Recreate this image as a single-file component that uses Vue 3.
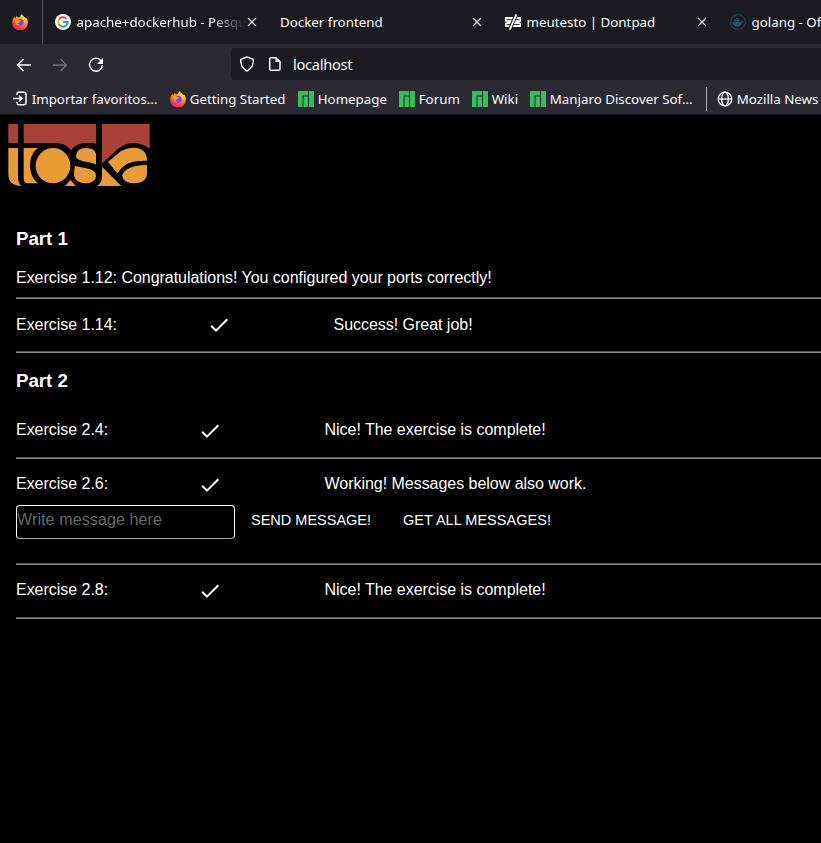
<script setup>
const bookmarks = [
  { label: 'Importar favoritos...', icon: 'import', w: 158 },
  { label: 'Getting Started', icon: 'fox', w: 128 },
  { label: 'Homepage', icon: 'manjaro', w: 101 },
  { label: 'Forum', icon: 'manjaro', w: 73 },
  { label: 'Wiki', icon: 'manjaro', w: 58 },
  { label: 'Manjaro Discover Sof...', icon: 'manjaro', w: 176 },
]
</script>

<template>
  <div class="window">
    <svg class="defs" width="0" height="0">
      <defs>
        <linearGradient id="flame" x1=".8" y1="0" x2=".25" y2="1">
          <stop offset="0" stop-color="#fff44f" />
          <stop offset=".35" stop-color="#ffa32b" />
          <stop offset=".68" stop-color="#ff4b3e" />
          <stop offset="1" stop-color="#e9168c" />
        </linearGradient>
        <symbol id="fox" viewBox="0 0 16 16">
          <path d="M2.2 3 3.4 4.3 4.8 1.8 5.9 3.6 8.2 3C8.3 1.6 9 .7 10 .1c.4 1.8 2.5 2.5 3.4 4l.6-.7c1.2 1.6 2 3.4 1.8 5.4A7.8 7.8 0 0 1 .2 8.6C.2 6.300 1 4.400 2.200 3Z" fill="url(#flame)" />
          <circle cx="8.200" cy="8.300" r="3.300" fill="#7542e5" />
          <path d="M3.300 5.500c1.500-.8 3-.4 4 .7l2 .3c-.4 1.100-2 1-2.300 2.200-.8.300-1.500-.1-1.900-.3.500 1.700 2 2.300 3.400 1.900-3 2.100-5.900-.2-5.200-4.800Z" fill="#ff9a22" />
          <path d="M9.200 4.500c3 .2 4.300 2.600 3.400 5 1.300-1.500 1.200-4.700-1.100-6.200Z" fill="#ffd43a" />
        </symbol>
        <symbol id="manjaro" viewBox="0 0 16 16">
          <path d="M0 0h10v4.500H4.500V16H0ZM5.500 5.500H10V16H5.500ZM11 0h5v16h-5Z" fill="#35bf5c" />
        </symbol>
        <symbol id="import" viewBox="0 0 16 16">
          <path d="M5 4V3a1.700 1.700 0 0 1 1.700-1.700h5.600A1.700 1.700 0 0 1 14 3v9a1.700 1.700 0 0 1-1.700 1.700H6.700A1.700 1.700 0 0 1 5 12v-1M1 7.500h8" fill="none" stroke="#fbfbfe" stroke-width="1.500" />
          <path d="m7.200 3.900 4 3.600-4 3.600Z" fill="#fbfbfe" />
        </symbol>
        <symbol id="close" viewBox="0 0 10 10">
          <path d="m1 1 8 8M9 1 1 9" stroke="#e4e3ea" stroke-width="1.150" fill="none" />
        </symbol>
        <symbol id="check" viewBox="0 0 24 24">
          <path d="M9 16.170 4.830 12l-1.420 1.410L9 19 21 7l-1.410-1.410Z" fill="#fff" />
        </symbol>
      </defs>
    </svg>

    <header class="browser">
      <div class="tabs">
        <div class="pinned"><svg width="16" height="16"><use href="#fox" /></svg></div>
        <div class="tab first">
          <svg width="16" height="16" viewBox="0 0 16 16">
            <circle cx="8" cy="8" r="8" fill="#fff" />
            <g fill="none" stroke-width="2">
              <path d="M11.500 4.700A4.700 4.700 0 0 0 4 5.700" stroke="#ea4335" />
              <path d="M4 5.600a4.700 4.700 0 0 0 0 4.800" stroke="#fbbc05" />
              <path d="M4 10.300a4.700 4.700 0 0 0 7.100 1.300" stroke="#34a853" />
              <path d="M11 11.700A4.700 4.700 0 0 0 12.700 8H8.200" stroke="#4285f4" />
            </g>
          </svg>
          <span class="title fade">apache+dockerhub - Pesqu</span>
          <svg class="x" width="10" height="10"><use href="#close" /></svg>
        </div>
        <div class="tab second">
          <span class="title">Docker frontend</span>
          <svg class="x" width="10" height="10"><use href="#close" /></svg>
        </div>
        <div class="tab third">
          <svg width="16" height="16" viewBox="0 0 16 16">
            <path d="M0 3H16V13H0Z" fill="#fff" />
            <path d="M1.500 5.700h13M0 8.200h1.500M14.500 8.200H16M1.500 10.500h13" stroke="#1c1b22" stroke-width=".9" />
            <path d="M11.500 0 4.500 16" stroke="#1c1b22" stroke-width="3.800" />
            <path d="M11.300 .3 4.800 15.700" stroke="#fff" stroke-width="1.700" />
          </svg>
          <span class="title">meutesto | Dontpad</span>
          <svg class="x" width="10" height="10"><use href="#close" /></svg>
        </div>
        <div class="tab fourth">
          <svg width="16" height="16" viewBox="0 0 16 16">
            <circle cx="8" cy="8" r="7.400" fill="none" stroke="#263e50" stroke-width="1.200" />
            <path d="M2.500 8h8.300c.6-.2.300-1 .5-1.700.8.300 1 .8 1 1.200.6-.1 1.200 0 1.600.3-.5.800-1.300.9-2 .9-.8 2.500-2.500 4-5 4-2.700 0-4.100-1.700-4.400-4.700ZM4 5.800h6v1.700H4ZM6 4h2.500v1.500H6Z" fill="#2b4d65" />
          </svg>
          <span class="title">golang - Of</span>
        </div>
      </div>

      <div class="nav">
        <svg class="nav-icon" width="16" height="16" viewBox="0 0 16 16"><path d="M15 8H1.500M7.500 2l-6 6 6 6" fill="none" stroke="#fbfbfe" stroke-width="1.400" /></svg>
        <svg class="nav-icon" width="16" height="16" viewBox="0 0 16 16"><path d="M1 8h13.500M8.500 2l6 6-6 6" fill="none" stroke="#74737b" stroke-width="1.300" /></svg>
        <svg class="nav-icon" width="16" height="16" viewBox="0 0 16 16"><path d="M13.200 4A6.400 6.400 0 1 0 14.400 8" fill="none" stroke="#fbfbfe" stroke-width="1.500" /><path d="M15 1v6H9Z" fill="#fbfbfe" /></svg>
        <div class="url">
          <svg width="16" height="16" viewBox="0 0 16 16"><path d="M8 .9 14.300 3.300C14.600 8.500 12.800 12.500 8 15.100 3.200 12.500 1.400 8.500 1.700 3.300Z" fill="none" stroke="#fbfbfe" stroke-width="1.400" stroke-linejoin="round" /></svg>
          <svg width="16" height="16" viewBox="0 0 16 16"><path d="M4 1.700h5l4 4V13a1.300 1.300 0 0 1-1.300 1.300H4A1.300 1.300 0 0 1 2.700 13V3A1.300 1.300 0 0 1 4 1.700Z" fill="none" stroke="#fbfbfe" stroke-width="1.500" /><path d="M8.500 1.500V6H13Z" fill="#fbfbfe" /></svg>
          <span>localhost</span>
        </div>
      </div>

      <div class="bookmarks">
        <div v-for="b in bookmarks" :key="b.label" class="bookmark" :style="{ width: b.w + 'px' }">
          <svg width="16" height="16"><use :href="'#' + b.icon" /></svg>
          <span>{{ b.label }}</span>
        </div>
        <div class="divider"></div>
        <div class="bookmark">
          <svg width="16" height="16" viewBox="0 0 16 16"><g fill="none" stroke="#fbfbfe" stroke-width="1.300"><circle cx="8" cy="8" r="6.800" /><ellipse cx="8" cy="8" rx="3.400" ry="6.800" /><path d="M1.200 8h13.600" /></g></svg>
          <span>Mozilla News</span>
        </div>
      </div>
    </header>

    <main>
      <svg class="logo" width="142" height="62" viewBox="24 27 426 186">
        <g fill="#a94138">
          <path d="M25 27H54V84H25Z" />
          <path d="M71 27H288V86Q283 84 275 84H258C240 84 222 92 213 107C205 95 190 84 165 84H71Z" />
          <path d="M306 27H449V101Q425 84 401 84Q385 84 371 90C355 98 325 130 308 143H306Z" />
        </g>
        <g fill="#e99b38">
          <path d="M25 99H54V190Q56 207 64 213H60Q25 210 25 178Z" />
          <path d="M71 99H115C82 118 82 182 115 205H85Q71 205 71 190Z" />
          <ellipse cx="159" cy="152" rx="52" ry="53" />
          <path d="M228 122Q230 99 258 99Q285 99 288 118V149C275 138 228 142 228 122Z" />
          <path d="M225 152C245 160 288 157 288 182C288 198 272 205 256 205C238 205 224 197 222 181Q222 163 225 152Z" />
          <path d="M195 213 212 195 227 213Z" />
          <path d="M324 141 362 109Q381 98 401 98Q441 99 441 137C392 137 373 145 352 175Z" />
          <path d="M366 181Q377 151 441 150V175Q440 205 401 205Q369 204 366 181Z" />
          <path d="M306 155 364 213H289Q306 205 306 185Z" />
        </g>
      </svg>

      <section>
        <h3>Part 1</h3>
        <p class="ports">Exercise 1.12: Congratulations! You configured your ports correctly!</p>
        <hr>
        <div class="row wide"><span>Exercise 1.14:</span><svg width="24" height="24"><use href="#check" /></svg><span>Success! Great job!</span></div>
        <hr>
      </section>
      <section>
        <h3 class="two">Part 2</h3>
        <div class="row"><span>Exercise 2.4:</span><svg width="24" height="24"><use href="#check" /></svg><span>Nice! The exercise is complete!</span></div>
        <hr>
        <div class="row"><span>Exercise 2.6:</span><svg width="24" height="24"><use href="#check" /></svg><span>Working! Messages below also work.</span></div>
        <div class="form">
          <input type="text" placeholder="Write message here">
          <button class="send">SEND MESSAGE!</button>
          <button class="get">GET ALL MESSAGES!</button>
        </div>
        <hr>
        <div class="row"><span>Exercise 2.8:</span><svg width="24" height="24"><use href="#check" /></svg><span>Nice! The exercise is complete!</span></div>
        <hr>
      </section>
    </main>
  </div>
</template>

<style>
body { margin: 0; background: #000; overflow: hidden; }
</style>

<style scoped>
* { box-sizing: border-box; }
svg { display: block; flex: none; }
.defs { position: absolute; }
.window { width: 821px; height: 843px; overflow: hidden; background: #000; color: #fff; }
.browser { height: 115px; background: #2b2a33; border-bottom: 1px solid #0c0c0d; font: 13.333px "Noto Sans", sans-serif; color: #fbfbfe; white-space: nowrap; overflow: hidden; }
.tabs { display: flex; height: 44px; background: #1c1b22; }
.pinned { width: 43px; height: 44px; border-right: 1px solid #5a5960; padding: 14px 0 0 12px; flex: none; }
.tab { display: flex; align-items: center; flex: none; height: 44px; width: 225px; padding-left: 12px; }
.tab .title { margin-left: 5.500px; line-height: 18px; }
.tab .x { margin-left: auto; }
.first { width: 214px; }
.first .title { width: 170px; }
.fade { -webkit-mask-image: linear-gradient(90deg, #000 78%, transparent 99%); mask-image: linear-gradient(90deg, #000 78%, transparent 99%); }
.second { padding-left: 17.500px; }
.third { padding-left: 23px; }
.fourth { padding-left: 23px; }
.nav { display: flex; align-items: center; height: 41px; padding-left: 16px; }
.nav-icon { margin-right: 20px; }
.url { flex: 1; display: flex; align-items: center; gap: 12px; height: 32px; margin: -1px 0 0 107px; padding-left: 8px; border-radius: 4px 0 0 4px; background: #1c1b22; font-size: 14.667px; letter-spacing: -.3px; }
.url span { margin-left: -2px; }
.bookmarks { display: flex; align-items: center; height: 28px; padding-left: 12px; }
.bookmark { display: flex; align-items: center; gap: 3.700px; flex: none; }
.bookmark span { line-height: 18px; }
.divider { width: 1px; height: 24px; background: #aaa9af; margin-right: 10px; flex: none; }
main { font: 16px/20px "Liberation Sans", Arial, sans-serif; letter-spacing: -.03px; padding-top: 9px; }
.logo { margin-left: 8px; }
section { padding-left: 16px; white-space: nowrap; }
h3 { margin: 0; padding-top: 42px; height: 72px; font-size: 18.720px; line-height: 21px; }
.ports { margin: 0; height: 39px; padding-top: 10px; }
hr { margin: 0; height: 2px; border: 0; border-top: 1px solid #555; border-bottom: 1px solid #8c8c8c; }
.row { display: grid; grid-template-columns: 182px 126.500px auto; height: 52px; padding-top: 15px; }
.row svg { margin-top: -1px; }
.wide { grid-template-columns: 191px 126.500px auto; padding-top: 16px; }
.wide svg { margin-top: -2px; }
h3.two { padding-top: 17px; height: 52px; }
.form { display: flex; height: 52px; padding-top: 0; margin-top: -6px; margin-bottom: 6px; }
input { width: 219px; height: 34px; background: #000; border: 1px solid #fff; border-bottom-color: #aaa; border-radius: 4px; padding: 0 0 5px; font: 16px "Liberation Sans", Arial, sans-serif; letter-spacing: .12px; color: #fff; outline: 0; }
input::placeholder { color: #666; opacity: 1; }
button { height: 30px; padding: 0; border: 0; background: none; color: #fff; font: 14.500px "Liberation Sans", Arial, sans-serif; text-align: left; }
.send { margin-left: 16px; width: 120px; }
.get { margin-left: 32px; letter-spacing: .03px; }
</style>
